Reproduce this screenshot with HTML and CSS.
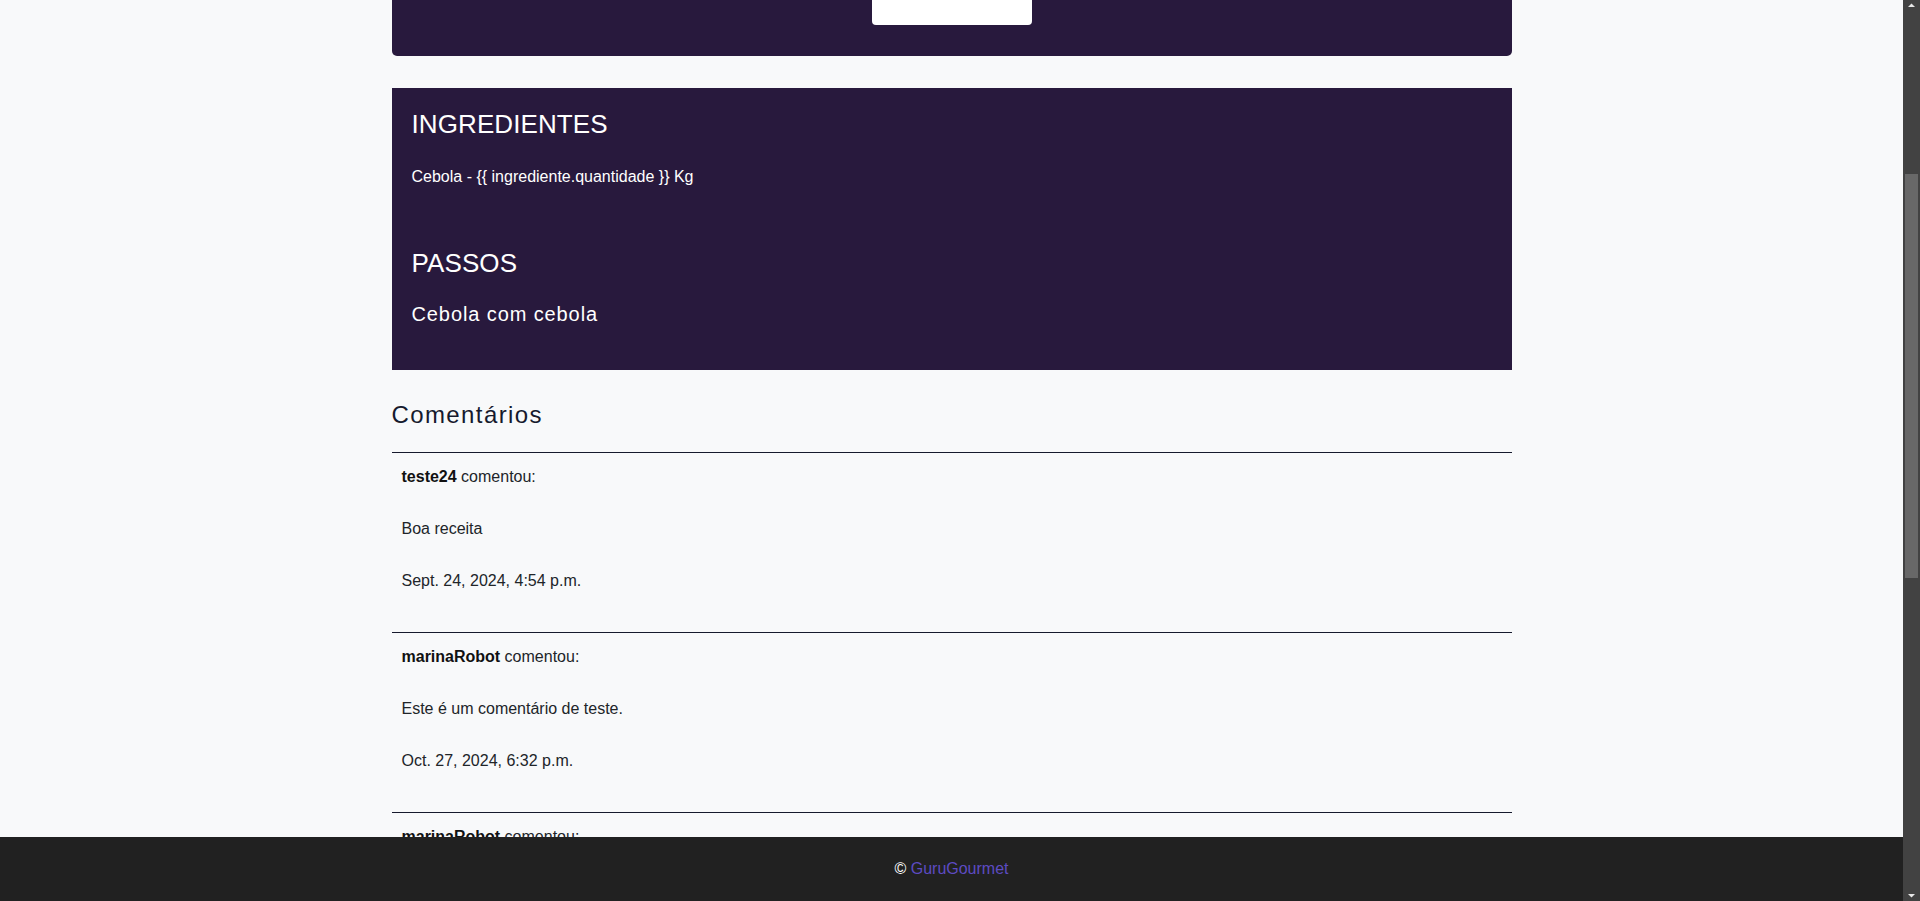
FILE: index.html
```html
<!DOCTYPE html>
<html lang="pt-BR">
<head>
<meta charset="utf-8">
<title>Cebola - GuruGourmet</title>
<link rel="stylesheet" href="styles.css">
</head>
<body>
<nav class="navbar">
  <div class="container nav-inner">
    <span class="brand">GuruGourmet</span>
    <div class="nav-links">
      <a class="nav-link" href="#">Receitas</a>
      <a class="nav-link" href="#">Sair</a>
    </div>
  </div>
</nav>

<main class="container page">
  <section class="card hero">
    <h1 class="hero-title">Cebola</h1>
    <p class="hero-meta">Por teste24 · Tempo de preparo: 10 min</p>
    <div class="hero-photo">
      <svg class="hero-photo-icon" viewBox="0 0 24 24" width="28" height="28" aria-hidden="true">
        <circle cx="12" cy="12" r="7" fill="none" stroke="#f3e6a0" stroke-width="1.5"/>
      </svg>
    </div>
  </section>

  <section class="card details">
    <h2 class="section-title">INGREDIENTES</h2>
    <ul class="ingredients">
      <li class="ingredient">Cebola - {{ ingrediente.quantidade }} Kg</li>
    </ul>
    <h2 class="section-title section-title-steps">PASSOS</h2>
    <p class="steps">Cebola com cebola</p>
  </section>

  <section class="comments">
    <h3 class="comments-title">Comentários</h3>
    <div class="comment-list">
      <article class="comment">
        <p class="comment-line"><strong class="comment-author">teste24</strong> comentou:</p>
        <p class="comment-line">Boa receita</p>
        <p class="comment-line">Sept. 24, 2024, 4:54 p.m.</p>
      </article>
      <article class="comment">
        <p class="comment-line"><strong class="comment-author">marinaRobot</strong> comentou:</p>
        <p class="comment-line">Este é um comentário de teste.</p>
        <p class="comment-line">Oct. 27, 2024, 6:32 p.m.</p>
      </article>
      <article class="comment">
        <p class="comment-line"><strong class="comment-author">marinaRobot</strong> comentou:</p>
        <p class="comment-line">Este é um comentário de teste.</p>
        <p class="comment-line">Oct. 27, 2024, 6:33 p.m.</p>
      </article>
      <article class="comment">
        <p class="comment-line"><strong class="comment-author">marinaRobot</strong> comentou:</p>
        <p class="comment-line">Este é um comentário de teste.</p>
        <p class="comment-line">Oct. 27, 2024, 6:35 p.m.</p>
      </article>
      <article class="comment">
        <p class="comment-line"><strong class="comment-author">marinaRobot</strong> comentou:</p>
        <p class="comment-line">Este é um comentário de teste.</p>
        <p class="comment-line">Oct. 27, 2024, 6:40 p.m.</p>
      </article>
      <article class="comment">
        <p class="comment-line"><strong class="comment-author">marinaRobot</strong> comentou:</p>
        <p class="comment-line">Este é um comentário de teste.</p>
        <p class="comment-line">Oct. 27, 2024, 6:41 p.m.</p>
      </article>
    </div>
  </section>
</main>

<footer class="footer">
  <span class="footer-text">© <a class="footer-link" href="#">GuruGourmet</a></span>
</footer>

<div class="scrollbar" aria-hidden="true">
  <svg class="scroll-arrow scroll-arrow-up" viewBox="0 0 17 17" width="17" height="17">
    <path d="M5 7 L8.5 3.5 L12 7 Z" fill="#e8e8e8"/>
  </svg>
  <div class="scroll-thumb"></div>
  <svg class="scroll-arrow scroll-arrow-down" viewBox="0 0 17 17" width="17" height="17">
    <path d="M5 10 L8.5 13.5 L12 10 Z" fill="#e8e8e8"/>
  </svg>
</div>
<script src="script.js"></script>
</body>
</html>
```

FILE: styles.css
```css
html {
  background: #f8f9fa;
}

body {
  margin: 0 17px 0 0;
  background: #f8f9fa;
  color: #212529;
  font-family: "Liberation Sans", Arial, sans-serif;
  font-size: 16px;
}

.container {
  width: 1120px;
  margin: 0 auto;
}

/* navbar (above the scrolled viewport) */
.navbar {
  height: 56px;
  background: #28193d;
}
.nav-inner {
  height: 100%;
  display: flex;
  align-items: center;
  justify-content: space-between;
}
.brand {
  color: #ffffff;
  font-size: 20px;
}
.nav-links {
  display: flex;
  gap: 20px;
}
.nav-link {
  color: #ffffff;
  text-decoration: none;
}

.page {
  padding-top: 24px;
  padding-bottom: 52px;
}

.card {
  background: #28193d;
  color: #ffffff;
}

/* top recipe card */
.hero {
  height: 326px;
  box-sizing: border-box;
  padding: 30px 20px 31px;
  border-radius: 5px;
  display: flex;
  flex-direction: column;
  align-items: center;
}
.hero-title {
  margin: 0 0 16px;
  font-size: 32px;
  line-height: 40px;
  font-weight: normal;
}
.hero-meta {
  margin: 0 0 16px;
  line-height: 24px;
}
.hero-photo {
  width: 160px;
  flex: 1;
  background: #ffffff;
  border-radius: 4px;
  display: flex;
  justify-content: center;
  padding-top: 20px;
  box-sizing: border-box;
}

/* ingredients / steps card */
.details {
  margin-top: 32px;
  padding: 22px 20px 44px;
}
.section-title {
  margin: 0;
  font-size: 26px;
  line-height: 29px;
  font-weight: normal;
  letter-spacing: 0.1px;
}
.section-title-steps {
  margin-top: 63px;
}
.ingredients {
  list-style: none;
  margin: 29px 0 0;
  padding: 0;
}
.ingredient {
  font-size: 16px;
  line-height: 18px;
}
.steps {
  margin: 24px 0 0;
  font-size: 20px;
  line-height: 24px;
  letter-spacing: 0.9px;
}

/* comments */
.comments {
  margin-top: 30px;
}
.comments-title {
  margin: 0;
  font-size: 24px;
  line-height: 29px;
  font-weight: normal;
  letter-spacing: 1.4px;
  color: #161a2d;
}
.comment-list {
  margin-top: 23px;
}
.comment {
  border-top: 1px solid #161a2d;
  padding: 12px 10px 39px;
  display: flex;
  flex-direction: column;
  gap: 28px;
}
.comment-line {
  margin: 0;
  line-height: 24px;
  color: #212529;
}
.comment-author {
  color: #111111;
}

/* fixed footer */
.footer {
  position: fixed;
  left: 0;
  right: 17px;
  bottom: 0;
  height: 64px;
  background: #212121;
  display: flex;
  align-items: center;
  justify-content: center;
}
.footer-text {
  color: #ffffff;
  font-size: 16px;
}
.footer-link {
  color: #5d4bc2;
  text-decoration: none;
}

/* window scrollbar (drawn over the right edge) */
.scrollbar {
  position: fixed;
  top: 0;
  right: 0;
  bottom: 0;
  width: 17px;
  background: #424242;
}
.scroll-arrow {
  position: absolute;
  left: 0;
  display: block;
}
.scroll-arrow-up {
  top: 0;
}
.scroll-arrow-down {
  bottom: 0;
}
.scroll-thumb {
  position: absolute;
  top: 174px;
  left: 2px;
  width: 13px;
  height: 404px;
  background: #686868;
}
```

FILE: script.js
```js
window.scrollTo(0, 350);
window.addEventListener('load', function () {
  window.scrollTo(0, 350);
});
```
